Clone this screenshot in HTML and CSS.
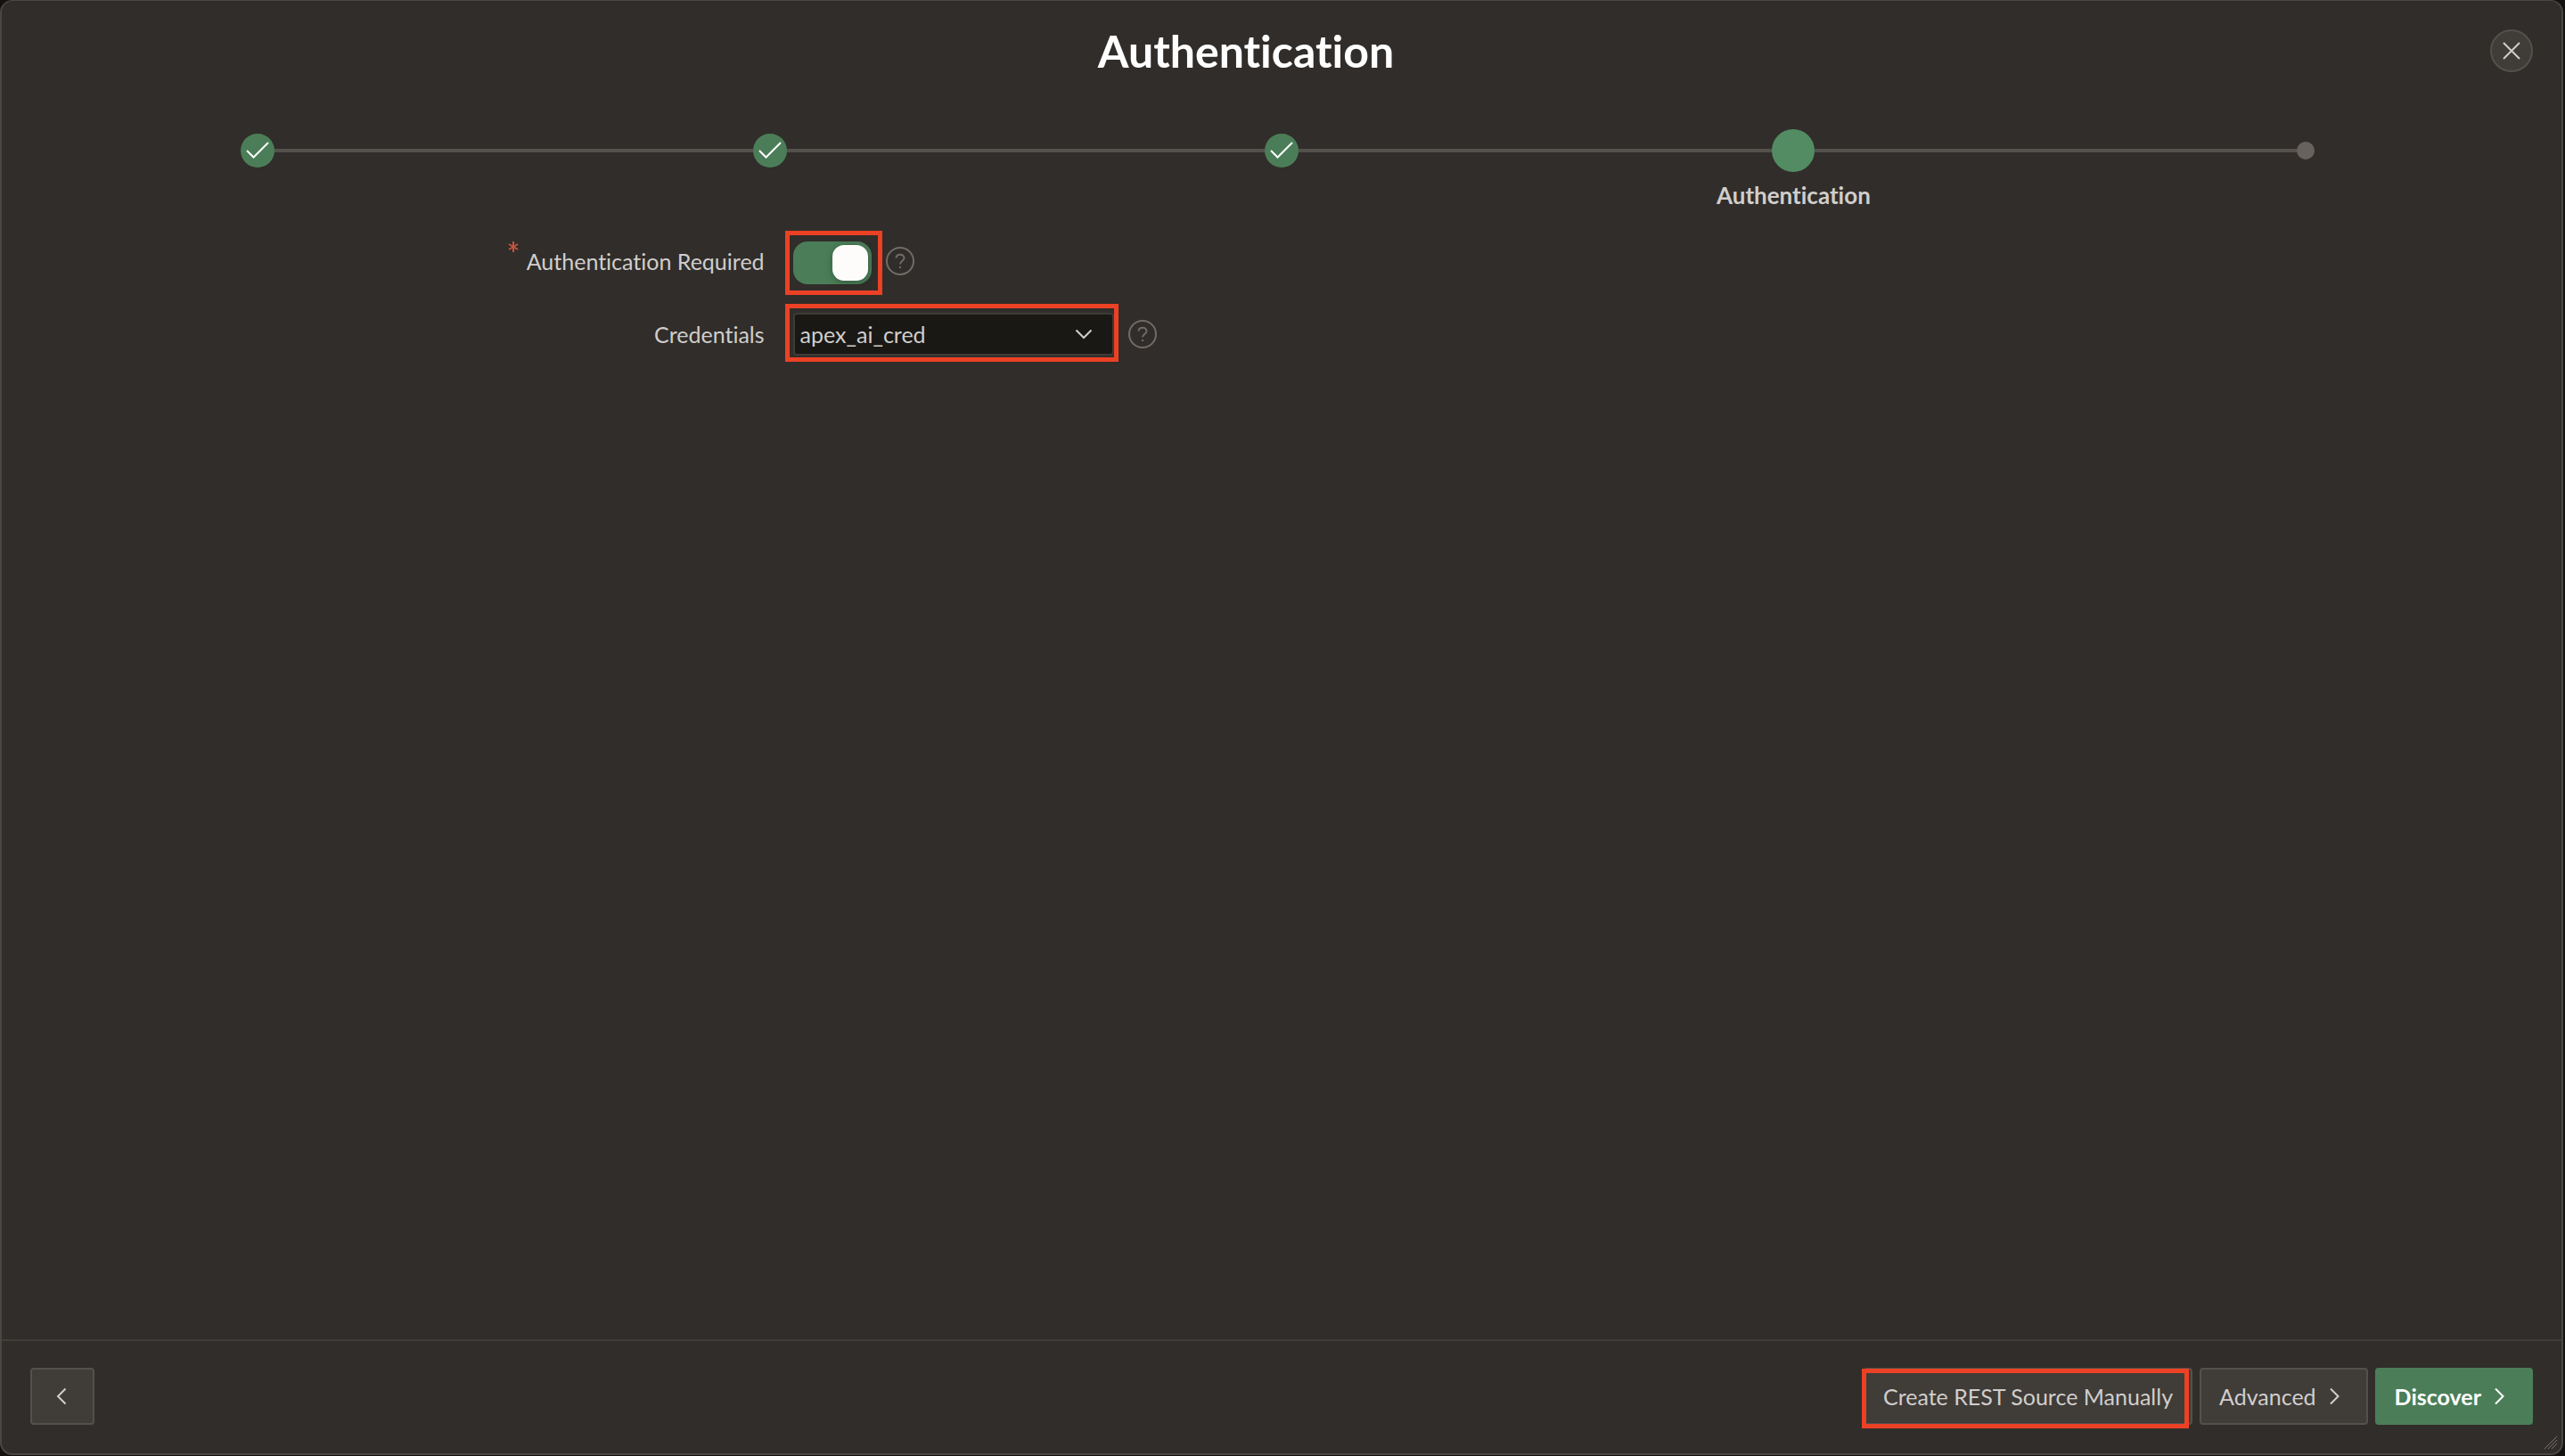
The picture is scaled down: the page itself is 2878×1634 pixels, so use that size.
FILE: index.html
```html
<!DOCTYPE html>
<html lang="en">
<head>
<meta charset="utf-8">
<title>Authentication</title>
<link rel="stylesheet" href="styles.css">
</head>
<body>
<main class="dialog" role="dialog" aria-labelledby="dialog-title">
  <header class="dialog-header">
    <h1 class="dialog-title" id="dialog-title">Authentication</h1>
    <button class="close-button" type="button" aria-label="Close">
      <svg width="20" height="20" viewBox="0 0 20 20"><path d="M1 1L19 19M19 1L1 19"/></svg>
    </button>
  </header>

  <ol class="progress">
    <li class="step step-done"><span class="marker"><svg width="38" height="38" viewBox="0 0 38 38"><path d="M7 19L14.500 26.500L31 10"/></svg></span></li>
    <li class="step step-done"><span class="marker"><svg width="38" height="38" viewBox="0 0 38 38"><path d="M7 19L14.500 26.500L31 10"/></svg></span></li>
    <li class="step step-done"><span class="marker"><svg width="38" height="38" viewBox="0 0 38 38"><path d="M7 19L14.500 26.500L31 10"/></svg></span></li>
    <li class="step step-current" aria-current="step"><span class="marker"></span><span class="step-label">Authentication</span></li>
    <li class="step step-next"><span class="marker"></span></li>
  </ol>

  <form class="form" id="auth-form">
    <div class="field">
      <div class="label-cell">
        <svg class="required" width="12" height="12" viewBox="0 0 12 12"><path d="M6 0V12M1 3L11 9M11 3L1 9"/></svg>
        <label for="auth-required">Authentication Required</label>
      </div>
      <div class="control-cell">
        <span class="switch-wrap"><input class="switch" id="auth-required" type="checkbox" role="switch" checked></span>
        <button class="help" type="button" aria-label="Help for Authentication Required">
          <svg width="32" height="32" viewBox="0 0 32 32"><circle cx="16" cy="16" r="15"/><path d="M11.500 12.500C11.500 10 13.500 8.700 16 8.700S20.500 10.300 20.500 12.700C20.500 15.500 16 16 16 19.500M16 22V24"/></svg>
        </button>
      </div>
    </div>
    <div class="field">
      <div class="label-cell"><label for="credentials">Credentials</label></div>
      <div class="control-cell">
        <span class="select-wrap">
          <select class="select" id="credentials"><option>apex_ai_cred</option></select>
          <svg class="select-arrow" width="20" height="12" viewBox="0 0 20 12"><path d="M1.500 1.500L10 10L18.500 1.500"/></svg>
        </span>
        <button class="help" type="button" aria-label="Help for Credentials">
          <svg width="32" height="32" viewBox="0 0 32 32"><circle cx="16" cy="16" r="15"/><path d="M11.500 12.500C11.500 10 13.500 8.700 16 8.700S20.500 10.300 20.500 12.700C20.500 15.500 16 16 16 19.500M16 22V24"/></svg>
        </button>
      </div>
    </div>
  </form>

  <footer class="dialog-footer">
    <button class="button button-back" type="button" aria-label="Previous">
      <svg width="14" height="20" viewBox="0 0 14 20"><path d="M10.500 1.500L2 10L10.500 18.500"/></svg>
    </button>
    <div class="actions">
      <button class="button button-manual" type="button">Create REST Source Manually</button>
      <button class="button" type="button">Advanced
        <svg class="next-icon" width="32" height="20" viewBox="0 0 32 20"><path d="M12 1.500L20.500 10L12 18.500"/></svg>
      </button>
      <button class="button button-primary" type="submit" form="auth-form">Discover
        <svg class="next-icon" width="32" height="20" viewBox="0 0 32 20"><path d="M12 1.500L20.500 10L12 18.500"/></svg>
      </button>
    </div>
  </footer>
  <svg class="resize-grip" width="16" height="16" viewBox="0 0 16 16"><path d="M1 15L15 1M5 15L15 5M9 15L15 9"/></svg>
</main>
</body>
</html>
```
FILE: styles.css
```css
:root {
  --surface: #312d2a;
  --button: #403c38;
  --line: #54504c;
  --green: #4b7e58;
  --text: #d0cecc;
  --mark: #ec4125;
}

* {
  box-sizing: border-box;
}

body {
  margin: 0;
  min-height: 100vh;
  display: flex;
  padding: 0 2px 1px 0;
  background: #131211;
  color: var(--text);
  font-family: Lato, "Open Sans", sans-serif;
  font-size: 25px;
  font-variant-ligatures: none;
  line-height: 32px;
}

button,
select {
  font: inherit;
  color: inherit;
}

svg {
  display: block;
  fill: none;
  stroke: currentColor;
  stroke-width: 2;
}

.dialog {
  position: relative;
  flex: 1;
  display: flex;
  flex-direction: column;
  background: var(--surface);
  border: 2px solid #4a4642;
  border-top-width: 1px;
  border-radius: 14px;
}

.dialog-header {
  display: flex;
  align-items: center;
  gap: 32px;
  padding: 24px 32px 0;
}

.dialog-title {
  flex: 1;
  margin: 0;
  color: #fff;
  font-size: 50px;
  font-weight: 700;
  line-height: 64px;
  text-align: center;
}

.close-button {
  width: 48px;
  height: 48px;
  padding: 0;
  display: grid;
  place-items: center;
  background: var(--button);
  border: 2px solid var(--line);
  border-radius: 50%;
}

.progress {
  display: grid;
  grid-template-columns: repeat(5, 1fr);
  margin: 0;
  padding: 56px 0 0;
  list-style: none;
}

.step {
  display: grid;
  grid-template-rows: 48px auto;
  grid-template-columns: 1fr;
  justify-items: center;
  align-items: center;
  row-gap: 10px;
}

.step::before {
  content: "";
  grid-area: 1 / 1;
  width: 100%;
  height: 4px;
  background: var(--line);
}

.step:first-child::before {
  width: 50%;
  justify-self: end;
}

.step:last-child::before {
  width: 50%;
  justify-self: start;
}

.marker {
  grid-area: 1 / 1;
  z-index: 1;
  border-radius: 50%;
}

.step-done .marker {
  width: 38px;
  height: 38px;
  background: var(--green);
  color: #fff;
}

.step-current .marker {
  width: 48px;
  height: 48px;
  background: #538c63;
}

.step-next .marker {
  width: 20px;
  height: 20px;
  background: #67625e;
}

.step-label {
  font-size: 26px;
  font-weight: 700;
}

.form {
  flex: 1;
  display: grid;
  align-content: start;
  gap: 34px;
  padding-top: 34px;
}

.field {
  display: grid;
  grid-template-columns: 3fr 7fr;
  height: 48px;
}

.label-cell {
  display: flex;
  justify-content: flex-end;
  gap: 9px;
  padding: 8px 6px 0 0;
}

.required {
  margin-top: -6px;
  color: #c4533f;
}

.control-cell {
  display: flex;
  align-items: flex-start;
  padding-left: 26px;
}

.switch-wrap,
.select-wrap,
.button-manual {
  position: relative;
}

.switch-wrap::after,
.select-wrap::after,
.button-manual::after {
  content: "";
  position: absolute;
  border: 5px solid var(--mark);
  pointer-events: none;
}

.switch-wrap::after {
  inset: -12px -12px -12px -9px;
}

.select-wrap::after {
  inset: -10px -5px -7px -9px;
}

.switch-wrap {
  display: flex;
  margin-top: 2px;
}

.switch {
  appearance: none;
  display: flex;
  justify-content: flex-end;
  width: 88px;
  height: 48px;
  margin: 0;
  padding: 4px;
  background: var(--green);
  border-radius: 16px;
}

.switch::before {
  content: "";
  width: 40px;
  height: 40px;
  background: #fdfcfa;
  border-radius: 13px;
  box-shadow: 0 2px 8px #0000004d;
}

.select-wrap {
  display: grid;
  align-items: center;
  width: 360px;
}

.select {
  grid-area: 1 / 1;
  appearance: none;
  width: 100%;
  height: 48px;
  margin: 0;
  padding: 0 48px 0 6px;
  background: #191815;
  border: 2px solid #3e3a36;
  border-radius: 4px;
}

.select-arrow {
  grid-area: 1 / 1;
  justify-self: end;
  margin-right: 24px;
  pointer-events: none;
}

.help {
  margin: 8px 0 0 16px;
  padding: 0;
  background: none;
  border: 0;
  color: #716c68;
}

.dialog-footer {
  display: flex;
  justify-content: space-between;
  padding: 30px 32px 32px;
  border-top: 2px solid #403c38;
}

.actions {
  display: flex;
  gap: 8px;
}

.button {
  display: flex;
  align-items: center;
  height: 64px;
  padding: 0 20px;
  background: var(--button);
  border: 2px solid var(--line);
  border-radius: 4px;
}

.button-back {
  width: 72px;
  justify-content: center;
}

.button-manual::after {
  inset: -1px 2px -6px -4px;
}

.button-primary {
  background: var(--green);
  border-color: var(--green);
  color: #fff;
  font-weight: 700;
}

.next-icon {
  margin-left: 4px;
}

.resize-grip {
  position: absolute;
  right: 4px;
  bottom: 4px;
  color: #7b7672;
  stroke-width: 1;
}
```
